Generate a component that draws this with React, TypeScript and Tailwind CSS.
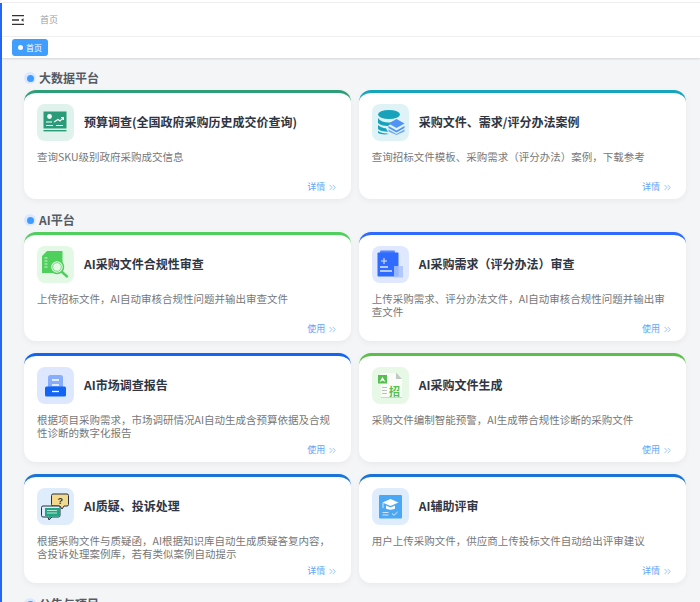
import { ChevronsRight } from "lucide-react";
import { ReactNode } from "react";

interface CardData {
    title: string;
    desc: string;
    action: string;
    border: string;
    iconBg: string;
    icon: ReactNode;
}

const BudgetIcon = () => (
    <svg viewBox="0 0 37 37" className="w-full h-full">
        <rect x="6.5" y="7.5" width="23" height="17" fill="#2a9d78" />
        <rect x="6.5" y="26" width="23" height="1.4" fill="#2a9d78" />
        <circle cx="12.5" cy="12.5" r="2.4" fill="#fff" />
        <path d="M9 18h6M9 21.5h7M19 21.5h7" stroke="#fff" strokeWidth="1.1" fill="none" />
        <path d="M17 18l4-2.5 2 1.5 3-3M24 13.5h2.4v2.4" stroke="#fff" strokeWidth="1.1" fill="none" />
    </svg>
);

const DatabaseIcon = () => (
    <svg viewBox="0 0 37 37" className="w-full h-full">
        <ellipse cx="17" cy="10.5" rx="11" ry="4.5" fill="#18a3bb" />
        <path d="M6 14c2 3 6 4.5 11 4.5 2 0 3 0 4-.5l-5 4c-5 0-8-1-10-3z" fill="#18a3bb" />
        <path d="M6 21c2 2 5 3 8 3.2l2 3.5c-5 0-8-.7-10-2.700z" fill="#18a3bb" />
        <path d="M6 27c2 1.500 5 2.200 9 2.500l2 .5c-5 1-9 0-11-1z" fill="#18a3bb" />
        <path d="M24.500 15l8 4.500-8 4.500-8-4.500z" fill="#4f94f5" />
        <path d="M16.500 22l8 4.500 8-4.500v2l-8 4.500-8-4.500z" fill="#4f94f5" />
        <path d="M16.500 25.500l8 4.500 8-4.500v2l-8 3.500-8-3.500z" fill="#6aa6f8" />
    </svg>
);

const ReviewIcon = () => (
    <svg viewBox="0 0 37 37" className="w-full h-full">
        <path d="M10 5h15.500v22H5V10z" fill="#4fcf5c" />
        <path d="M7.500 12h3M7.500 15h3M7.500 18h3M7.500 21h3" stroke="#e3f8e5" strokeWidth="0.9" />
        <circle cx="20" cy="21" r="6.500" fill="#e3f8e5" stroke="#4fcf5c" strokeWidth="1.500" />
        <circle cx="20" cy="21" r="4.300" fill="#e3f8e5" stroke="#4fcf5c" strokeWidth="0.700" />
        <path d="M25 26l5 4.500" stroke="#4fcf5c" strokeWidth="2.400" strokeLinecap="round" />
    </svg>
);

const RequirementIcon = () => (
    <svg viewBox="0 0 37 37" className="w-full h-full">
        <rect x="8" y="4.500" width="15" height="3" rx="1" fill="#2f6bff" opacity="0.8" />
        <rect x="5.500" y="6.500" width="21" height="24" rx="1" fill="#2f6bff" />
        <rect x="22" y="20" width="9" height="11.500" fill="#a9c2fb" opacity="0.85" />
        <path d="M12 12v6M9 15h6" stroke="#dfe8ff" strokeWidth="1.100" />
        <path d="M8 21h8M8 25h12" stroke="#dfe8ff" strokeWidth="1.300" />
    </svg>
);

const DrawerIcon = () => (
    <svg viewBox="0 0 37 37" className="w-full h-full">
        <rect x="11" y="8" width="15" height="15" rx="2.500" fill="#87adfb" />
        <path d="M15 13h7M15 18h7" stroke="#fff" strokeWidth="1.300" />
        <rect x="8" y="19.500" width="21" height="10" rx="1.500" fill="#1464f4" />
        <path d="M15 24.500h7" stroke="#fff" strokeWidth="1.300" />
    </svg>
);

const TenderIcon = () => (
    <svg viewBox="0 0 37 37" className="w-full h-full">
        <path d="M9 6h15l6 6v18.500H9z" fill="#fafcfa" />
        <path d="M24 5.500l6 6.500h-6z" fill="#c4c8c4" />
        <path d="M9 30.500h21" stroke="#c8ccc8" strokeWidth="0.800" />
        <rect x="6" y="8" width="9" height="8.500" fill="#56bf4f" />
        <path d="M7.500 15l3-5 3 5-3-1.500z" fill="#fff" />
        <path d="M10 20.500h5M10 23.500h5M10 26.500h5" stroke="#b5bab5" strokeWidth="0.900" />
        <text x="17" y="29" fontSize="11" fontWeight="700" fill="#56bf4f" fontFamily="'Noto Sans CJK SC', sans-serif">招</text>
    </svg>
);

const ChatIcon = () => (
    <svg viewBox="0 0 37 37" className="w-full h-full">
        <path d="M16 6h14a1.500 1.500 0 0 1 1.500 1.500v9A1.500 1.500 0 0 1 30 18h-3l-2 3-2-3h-7a1.500 1.500 0 0 1-1.500-1.500v-9A1.500 1.500 0 0 1 16 6z" fill="#f3d98d" stroke="#2b3340" strokeWidth="1" />
        <text x="20.500" y="16" fontSize="9" fontWeight="700" fill="#2b3340" fontFamily="'Liberation Sans', sans-serif">?</text>
        <path d="M6 18h15.500a1.500 1.500 0 0 1 1.500 1.500v8a1.500 1.500 0 0 1-1.500 1.500H15l-3 3-1-3H6a1.500 1.500 0 0 1-1.500-1.500v-8A1.500 1.500 0 0 1 6 18z" fill="#dfecfb" stroke="#2b3340" strokeWidth="1" />
        <path d="M8 20h15v7.500a1 1 0 0 1-1 1h-7l-2.500 2.500-1-2.500H8z" fill="#1fa784" />
        <path d="M10 22.500h10M10 25h10" stroke="#dff5ee" strokeWidth="0.800" />
    </svg>
);

const ExpertIcon = () => (
    <svg viewBox="0 0 37 37" className="w-full h-full">
        <rect x="7" y="7" width="23" height="23.500" rx="1" fill="#4aa8f5" />
        <path d="M18.500 11l8 3.500-8 3.500-8-3.500z" fill="#fff" />
        <path d="M14 17.500v3c1.500 1.500 7.500 1.500 9 0v-3l-4.500 2z" fill="#fff" />
        <path d="M11 15v5" stroke="#fff" strokeWidth="0.800" />
        <path d="M10.500 24.500h6M10.500 27h6" stroke="#dfecfb" strokeWidth="0.900" />
        <path d="M20 25.500l2 1.800 3.500-3.300" stroke="#dfecfb" strokeWidth="1" fill="none" />
    </svg>
);

const dataCards: CardData[] = [
    { title: "预算调查(全国政府采购历史成交价查询)", desc: "查询SKU级别政府采购成交信息", action: "详情", border: "border-t-[#2e9e78]", iconBg: "bg-[#e0f2ec]", icon: <BudgetIcon /> },
    { title: "采购文件、需求/评分办法案例", desc: "查询招标文件模板、采购需求（评分办法）案例，下载参考", action: "详情", border: "border-t-[#17a5bb]", iconBg: "bg-[#dff3f7]", icon: <DatabaseIcon /> },
];

const aiCards: CardData[] = [
    { title: "AI采购文件合规性审查", desc: "上传招标文件，AI自动审核合规性问题并输出审查文件", action: "使用", border: "border-t-[#4fcf5c]", iconBg: "bg-[#e3f8e5]", icon: <ReviewIcon /> },
    { title: "AI采购需求（评分办法）审查", desc: "上传采购需求、评分办法文件，AI自动审核合规性问题并输出审查文件", action: "使用", border: "border-t-[#2f6bff]", iconBg: "bg-[#dfe8ff]", icon: <RequirementIcon /> },
    { title: "AI市场调查报告", desc: "根据项目采购需求，市场调研情况AI自动生成含预算依据及合规性诊断的数字化报告", action: "使用", border: "border-t-[#1464f4]", iconBg: "bg-[#dde8ff]", icon: <DrawerIcon /> },
    { title: "AI采购文件生成", desc: "采购文件编制智能预警，AI生成带合规性诊断的采购文件", action: "使用", border: "border-t-[#5ac04a]", iconBg: "bg-[#e8f8e6]", icon: <TenderIcon /> },
    { title: "AI质疑、投诉处理", desc: "根据采购文件与质疑函，AI根据知识库自动生成质疑答复内容，含投诉处理案例库，若有类似案例自动提示", action: "详情", border: "border-t-[#1a74d8]", iconBg: "bg-[#dfecfb]", icon: <ChatIcon /> },
    { title: "AI辅助评审", desc: "用户上传采购文件，供应商上传投标文件自动给出评审建议", action: "详情", border: "border-t-[#1a74d8]", iconBg: "bg-[#dfecfb]", icon: <ExpertIcon /> },
];

const SectionTitle = ({ label }: { label: string }) => (
    <div className="flex items-center h-[14px] mb-[5px] gap-[3px]">
        <span className="flex items-center justify-center w-[12px] h-[12px] rounded-full bg-[#dbe8ff]">
            <span className="w-[7px] h-[7px] rounded-full bg-[#3f9bff]" />
        </span>
        <span className="text-[12px] font-bold text-[#555a63]">{label}</span>
    </div>
);

const Card = ({ card }: { card: CardData }) => (
    <div className={`flex flex-col h-[109px] bg-white rounded-[12px] border-t-[3px] shadow-[0_2px_6px_rgba(0,0,0,0.05)] pt-[11px] pr-[15px] pb-[6px] pl-[13px] ${card.border}`}>
        <div className="flex items-center gap-[10px]">
            <div className={`w-[37px] h-[37px] shrink-0 rounded-[8px] ${card.iconBg}`}>{card.icon}</div>
            <h3 className="mb-[2px] text-[12px] font-bold text-[#2f3542]">{card.title}</h3>
        </div>
        <p className="mt-[9px] mr-[-2px] text-[10.5px] leading-[13.400px] text-[#777]">{card.desc}</p>
        <div className="mt-auto mr-[-2px] flex items-center justify-end gap-[2px] text-[9px] leading-[12px] text-[#60a5fa]">
            <span>{card.action}</span>
            <ChevronsRight size={11} strokeWidth={1.4} />
        </div>
    </div>
);

export default function App() {
    return (
        <div className="flex h-[602px] w-[700px] overflow-hidden bg-[#f4f5f7] font-['Noto_Sans_CJK_SC','Noto_Sans',sans-serif]">
            <div className="w-[2px] shrink-0 bg-[#2567f5] mt-[3px]" />
            <div className="flex-1 min-w-0">
                <div className="h-[3px] bg-white border-b border-[#eeeeee]" />
                <header className="flex items-center h-[34px] bg-white border-b border-[#f1f1f1] pl-[10px]">
                    <svg viewBox="0 0 12 10" className="w-[12px] h-[10px]">
                        <path d="M0 .7h12M0 5h7M0 9.300h12" stroke="#333" strokeWidth="1.300" />
                        <path d="M11.500 3.200v3.600L9 5z" fill="#333" />
                    </svg>
                    <span className="ml-[16px] text-[9px] text-[#9aa0a8]">首页</span>
                </header>
                <div className="flex items-center h-[21px] bg-white shadow-[0_1px_2px_rgba(0,0,0,0.14)] pl-[10px]">
                    <div className="flex items-center gap-[3px] h-[17px] px-[6px] rounded-[3px] bg-[#409eff] text-[8px] text-white">
                        <span className="w-[5px] h-[5px] rounded-full bg-white" />
                        首页
                    </div>
                </div>
                <main className="pt-[13px] pl-[22px] pr-[14px]">
                    <SectionTitle label="大数据平台" />
                    <div className="grid grid-cols-2 gap-x-[7.5px] gap-y-[12px]">
                        {dataCards.map((card) => <Card key={card.title} card={card} />)}
                    </div>
                    <div className="mt-[14px]">
                        <SectionTitle label="AI平台" />
                    </div>
                    <div className="grid grid-cols-2 gap-x-[7.5px] gap-y-[12px]">
                        {aiCards.map((card) => <Card key={card.title} card={card} />)}
                    </div>
                    <div className="mt-[14px]">
                        <SectionTitle label="公告与项目" />
                    </div>
                </main>
            </div>
        </div>
    );
}
